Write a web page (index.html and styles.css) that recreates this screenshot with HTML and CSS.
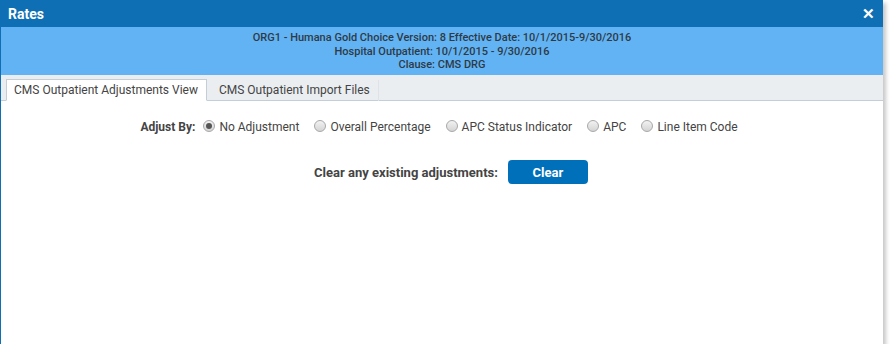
FILE: index.html
```html
<!DOCTYPE html>
<html lang="en">
<head>
  <meta charset="UTF-8">
  <title>Rates</title>
  <link rel="stylesheet" href="styles.css">
</head>
<body>
  <div class="dialog">
    <div class="titlebar">
      <span class="title">Rates</span>
      <span class="close">&#x2715;</span>
    </div>
    <div class="info">
      <div>ORG1 - Humana Gold Choice Version: 8 Effective Date: 10/1/2015-9/30/2016</div>
      <div>Hospital Outpatient: 10/1/2015 - 9/30/2016</div>
      <div>Clause: CMS DRG</div>
    </div>
    <div class="tabs">
      <div class="tab active">CMS Outpatient Adjustments View</div>
      <div class="tab">CMS Outpatient Import Files</div>
    </div>
    <div class="content">
      <div class="adjust-row">
        <span class="label">Adjust By:</span>
        <label class="option"><input type="radio" name="adjust" checked> No Adjustment</label>
        <label class="option"><input type="radio" name="adjust"> Overall Percentage</label>
        <label class="option"><input type="radio" name="adjust"> APC Status Indicator</label>
        <label class="option"><input type="radio" name="adjust"> APC</label>
        <label class="option"><input type="radio" name="adjust"> Line Item Code</label>
      </div>
      <div class="clear-row">
        <span class="label">Clear any existing adjustments:</span>
        <button type="button" class="btn">Clear</button>
      </div>
    </div>
  </div>
</body>
</html>
```

FILE: styles.css
```css
body {
  margin: 0;
  font-family: Roboto, "Liberation Sans", Arial, sans-serif;
  background: #fff;
}
.dialog {
  width: 882px;
  height: 344px;
  border-left: 1px solid #0f6fb4;
  box-shadow: 3px 3px 4px rgba(0, 0, 0, 0.22);
  display: flex;
  flex-direction: column;
  background: #fff;
}
.titlebar {
  height: 27px;
  background: #0f6fb4;
  color: #fff;
  display: flex;
  align-items: center;
  justify-content: space-between;
  padding: 0 8px 0 7px;
}
.title {
  font-size: 14px;
  font-weight: bold;
}
.close {
  font-size: 15px;
  font-weight: bold;
}
.info {
  height: 48px;
  box-sizing: border-box;
  padding-top: 4px;
  background: #62b3f4;
  color: #2e3a45;
  text-align: center;
  font-size: 11px;
  font-weight: 500;
  line-height: 13.5px;
}
.tabs {
  height: 26px;
  box-sizing: border-box;
  background: #eaeef1;
  border-bottom: 1px solid #c3ced6;
  display: flex;
  align-items: flex-end;
  padding-left: 5px;
}
.tab {
  height: 21px;
  box-sizing: border-box;
  padding: 3px 8px 0 8px;
  font-size: 12px;
  color: #444;
  margin-bottom: -1px;
}
.tab.active {
  background: #fff;
  border: 1px solid #c3ced6;
  border-bottom: 1px solid #fff;
  padding-left: 7px;
  height: 22px;
}
.tab + .tab {
  padding-left: 12px;
  padding-right: 8px;
  border-right: 1px solid #dde3e8;
}
.content {
  flex: 1;
  padding-top: 19px;
  font-size: 12px;
  color: #444;
}
.adjust-row,
.clear-row {
  display: flex;
  justify-content: center;
  align-items: center;
}
.adjust-row {
  padding-right: 6px;
}
.label {
  font-weight: bold;
  color: #444;
  margin-right: 10px;
}
.adjust-row .label {
  margin-right: 8px;
}
.option {
  display: flex;
  align-items: center;
  margin-right: 15px;
}
.option:last-child {
  margin-right: 0;
}
.option input {
  appearance: none;
  width: 12px;
  height: 12px;
  margin: 0 4px 2px 0;
  border-radius: 50%;
  border: 1px solid #a8a8a8;
  background: linear-gradient(#f2f2f2, #d4d4d4);
  box-sizing: border-box;
  position: relative;
}
.option input:checked::after {
  content: "";
  position: absolute;
  left: 2px;
  top: 2px;
  width: 6px;
  height: 6px;
  border-radius: 50%;
  background: #555;
}
.clear-row {
  margin-top: 26px;
  padding-left: 18px;
  font-size: 13px;
}
.btn {
  width: 80px;
  height: 24px;
  background: #0070bb;
  color: #fff;
  border: none;
  border-radius: 4px;
  font-family: inherit;
  font-size: 13px;
  font-weight: bold;
  cursor: pointer;
}
```
